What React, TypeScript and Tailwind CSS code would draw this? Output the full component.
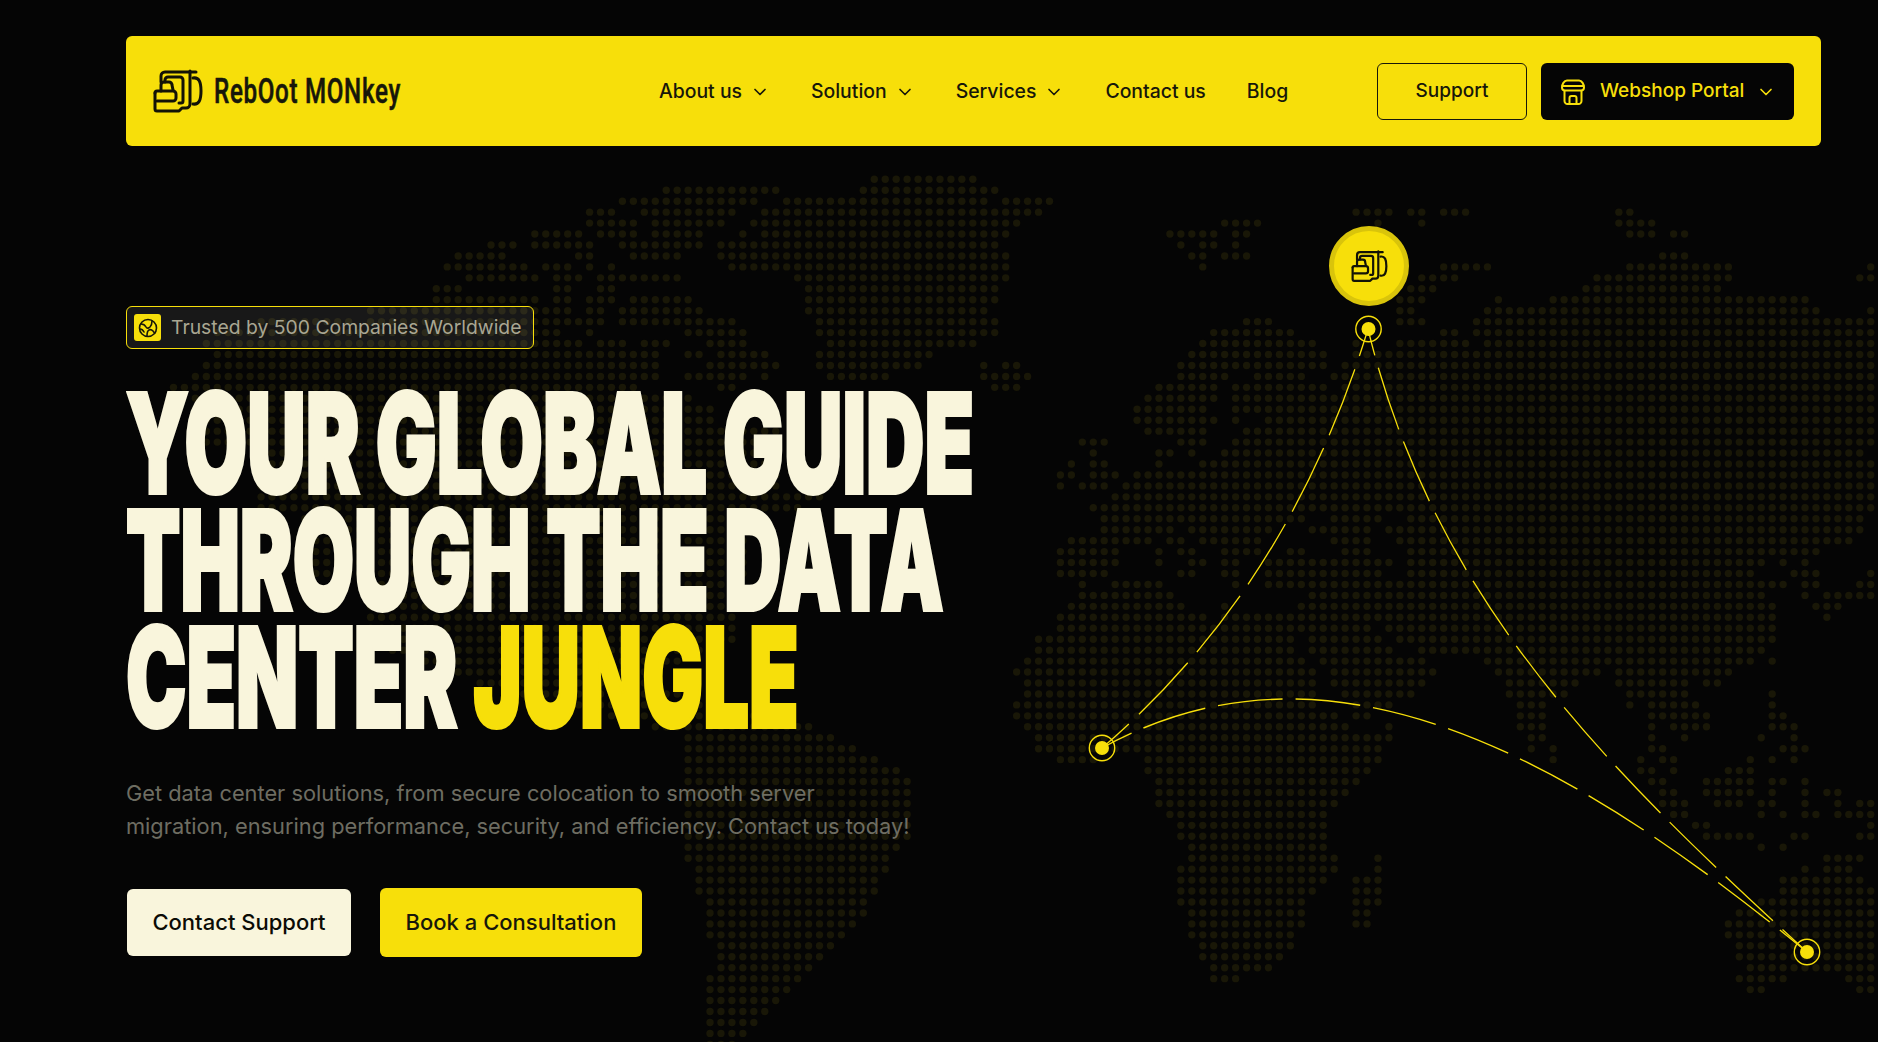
import { ChevronDown } from "lucide-react";

const ROWS: number[][] = [
  [-12, -3],
  [-31, -21, -13, -1],
  [-35, -23, -20, -2, 0, 4],
  [-38, -36, -33, -25, -22, 3, 32, 35, 37, 38, 40, 42, 56, 57],
  [-38, -34, -32, -26, -23, 1, 20, 23, 34, 34, 38, 38, 56, 59],
  [-43, -39, -37, -34, -32, -28, -24, -24, -22, 0, 15, 19, 21, 22, 57, 59, 61, 62],
  [-47, -45, -43, -38, -35, -28, -26, -1, 16, 16, 18, 19, 21, 21],
  [-50, -46, -39, -38, -34, -30, -26, 0, 17, 18, 20, 22, 60, 62],
  [-51, -44, -42, -40, -38, -38, -36, -36, -25, 0, 18, 18, 40, 44, 57, 66, 79, 79],
  [-49, -43, -41, -39, -37, -30, -19, 0, 38, 41, 54, 66, 78, 79],
  [-52, -50, -41, -40, -37, -36, -18, -1, 37, 39, 53, 65],
  [-52, -43, -41, -40, -38, -36, -34, -29, -18, -1, 36, 38, 45, 45, 50, 73],
  [-58, -41, -40, -40, -38, -37, -35, -28, -18, -2, 36, 37, 44, 74, 79, 79],
  [-68, -60, -58, -39, -38, -37, -35, -25, -17, -1, 22, 24, 36, 38, 43, 79],
  [-72, -41, -38, -38, -29, -24, -17, -1, 19, 26, 40, 41, 43, 79],
  [-73, -39, -37, -35, -33, -31, -27, -24, -16, -3, 18, 28, 32, 32, 36, 42, 44, 79],
  [-72, -32, -29, -28, -26, -22, -17, -7, 17, 29, 32, 79],
  [-73, -32, -27, -21, -17, -8, -2, -2, 0, 1, 16, 29, 31, 79],
  [-74, -32, -29, -24, -22, -22, -16, -11, -2, 2, 16, 20, 23, 27, 30, 79],
  [-76, -34, -26, -25, -1, 1, 14, 19, 21, 29, 31, 79],
  [-74, -29, 13, 19, 21, 79],
  [-74, -27, 12, 18, 21, 79],
  [-74, -27, 12, 19, 21, 21, 24, 79],
  [-74, -21, 13, 18, 22, 79],
  [-74, -21, 7, 9, 16, 18, 21, 79],
  [-68, -21, 8, 8, 14, 15, 17, 17, 20, 78],
  [-68, -21, 6, 6, 8, 9, 14, 14, 18, 79],
  [-68, -21, 5, 6, 8, 10, 12, 79],
  [-68, -21, 5, 5, 7, 9, 11, 79],
  [-68, -17, 10, 79],
  [-68, -19, 8, 79],
  [-64, -24, 9, 27, 30, 34, 37, 78],
  [-64, -24, 9, 15, 17, 24, 28, 33, 35, 78],
  [-64, -24, 6, 13, 15, 16, 18, 23, 30, 33, 36, 77],
  [-64, -24, 5, 10, 14, 14, 16, 17, 20, 23, 26, 27, 31, 33, 37, 74],
  [-64, -24, 5, 10, 14, 14, 17, 18, 20, 21, 24, 35, 37, 69, 71, 71, 73, 73],
  [-64, -24, 5, 9, 16, 17, 20, 21, 24, 34, 37, 68, 72, 74, 79, 79],
  [-58, -25, 7, 7, 10, 14, 21, 21, 24, 71, 73, 74, 78, 79],
  [-58, -25, 7, 15, 28, 69, 73, 73, 75, 79],
  [-58, -25, 6, 16, 20, 20, 27, 70, 74, 76],
  [-58, -25, 5, 18, 20, 70, 75, 75],
  [-58, -25, 5, 33, 35, 70],
  [-58, -25, 3, 26, 28, 34, 36, 70],
  [-56, -28, 3, 26, 28, 35, 38, 69],
  [-54, -30, 2, 27, 29, 38, 44, 68, 70, 70],
  [-52, -32, 1, 28, 30, 39, 45, 54, 56, 66],
  [-48, -32, 2, 28, 30, 38, 46, 52, 56, 62, 64, 65],
  [-44, -30, 2, 28, 31, 37, 46, 51, 57, 62, 70, 70],
  [-40, -26, 1, 28, 32, 35, 47, 49, 57, 57, 59, 63, 70, 70],
  [-36, -20, 1, 30, 32, 33, 47, 49, 59, 64, 70, 71],
  [-32, -18, 2, 31, 35, 35, 47, 49, 59, 59, 61, 64, 70, 72],
  [-29, -16, 3, 35, 48, 49, 59, 59, 62, 62, 69, 69, 72, 72],
  [-29, -14, 3, 34, 48, 48, 50, 50, 59, 60, 71, 73],
  [-29, -12, 5, 8, 13, 34, 50, 50, 58, 58, 60, 61, 68, 68, 70, 70, 72, 72],
  [-29, -10, 13, 33, 58, 59, 61, 61, 66, 68],
  [-29, -9, 14, 32, 59, 60, 64, 68, 70, 71, 73, 73],
  [-29, -9, 14, 31, 60, 61, 64, 68, 70, 70, 73, 73, 75, 76],
  [-29, -9, 14, 30, 60, 62, 65, 67, 69, 70, 73, 73, 76, 76, 78, 79],
  [-29, -9, 15, 29, 61, 62, 69, 69, 71, 71, 73, 74, 76, 79],
  [-29, -9, 16, 29, 63, 64, 79, 79],
  [-29, -9, 16, 29, 64, 68, 72, 73, 78, 79],
  [-29, -10, 17, 29, 69, 69, 71, 71],
  [-29, -11, 17, 30, 34, 34, 75, 78],
  [-28, -11, 16, 30, 34, 34, 73, 73, 75, 77],
  [-28, -12, 16, 29, 32, 34, 71, 78],
  [-28, -12, 16, 28, 32, 34, 71, 79],
  [-27, -13, 16, 27, 32, 34, 69, 79],
  [-27, -13, 17, 27, 32, 33, 67, 79],
  [-27, -14, 17, 27, 32, 33, 66, 79],
  [-27, -15, 17, 26, 66, 79],
  [-26, -16, 18, 26, 67, 79],
  [-26, -17, 18, 25, 67, 79],
  [-26, -18, 19, 24, 68, 79],
  [-27, -19, 19, 21, 67, 71, 77, 79],
  [-27, -20, 68, 69, 78, 79],
  [-27, -21],
  [-27, -22],
  [-27, -23],
  [-27, -24],
  [-27, -25],
];

const dots: { x: number; y: number }[] = [];
ROWS.forEach((spans, r) => {
  for (let i = 0; i < spans.length; i += 2) {
    for (let c = spans[i]; c <= spans[i + 1]; c++) {
      dots.push({ x: 1005.67 + 10.95 * c, y: 179.3 + 10.95 * r });
    }
  }
});

function Logo({ className }: { className: string }) {
  return (
    <svg viewBox="0 0 50 45" fill="none" stroke="#131306" strokeWidth="3" strokeLinecap="round" strokeLinejoin="round" className={className}>
      <path d="M43 3H12a4 4 0 0 0-4 4v6" />
      <path d="M37 2v33a4 4 0 0 1-4 4h-4l-3 3H4a2 2 0 0 1-2-2V24" />
      <path d="M12 13v-2a3 3 0 0 1 3-3h12a3 3 0 0 1 3 3v21a2 2 0 0 1-2 2h-2" />
      <path d="M8 22v-6a3 3 0 0 1 3-3h5a3 3 0 0 1 3 3l1 5" />
      <path d="M2 24a2 2 0 0 1 2-2h16a3 3 0 0 1 3 3v4a3 3 0 0 1-3 3H4" />
      <path d="M40 9c6-1 8 4 8 13s-2 14-8 13" />
    </svg>
  );
}

function NavItem({ label, chevron }: { label: string; chevron?: boolean }) {
  return (
    <a className="flex items-center gap-[8px] pt-[2px] text-[19.4px] font-medium text-[#17170a]">
      {label}
      {chevron && <ChevronDown size={20} strokeWidth={2} />}
    </a>
  );
}

function StoreIcon() {
  return (
    <svg viewBox="0 0 26 26" fill="none" stroke="#f7df0a" strokeWidth="2" strokeLinecap="round" strokeLinejoin="round" className="h-[26px] w-[26px]">
      <path d="M7 1.5h12c3 0 5 4 5 7a3 3 0 0 1-3 3H5a3 3 0 0 1-3-3c0-3 2-7 5-7z" />
      <path d="M2.5 7h21" />
      <path d="M4.5 12v10a3 3 0 0 0 3 3h11a3 3 0 0 0 3-3V12" />
      <path d="M9.5 25v-6a2 2 0 0 1 2-2h3a2 2 0 0 1 2 2v6" />
    </svg>
  );
}

function GlobeIcon() {
  return (
    <svg viewBox="0 0 20 20" fill="none" stroke="#17170a" strokeWidth="1.6" strokeLinecap="round" strokeLinejoin="round" className="h-[20px] w-[20px]">
      <circle cx="10" cy="10" r="8.5" />
      <path d="M3 6c2 0 4 1 5 3s3 1 4 0 2-4 2-6" />
      <path d="M9 18c0-3 0-5 2-6s3 0 4 1 1 2 2 2" />
      <path d="M2 11c2 0 3 1 4 3" />
    </svg>
  );
}

const lineClass = "block origin-left whitespace-nowrap [-webkit-text-stroke:4px_currentColor]";

export default function App() {
  return (
    <div className="relative h-[1042px] w-full overflow-hidden bg-[#050505] font-['Inter',sans-serif]">
      <svg viewBox="0 0 1878 1042" className="absolute inset-0 h-full w-full" fill="none">
        {dots.map((d, i) => (
          <circle key={i} cx={d.x} cy={d.y} r="3.7" fill="#191707" />
        ))}
        <path d="M1102 748 Q1289 587.5 1368 329" stroke="#f7df0a" strokeWidth="1.3" strokeDasharray="71 14" strokeDashoffset="35" />
        <path d="M1368 329 C1434 601.6 1610 772 1807 952" stroke="#f7df0a" strokeWidth="1.3" strokeDasharray="65 13" strokeDashoffset="38" />
        <path d="M1102 748 C1329.5 622.4 1567 755.5 1807 952" stroke="#f7df0a" strokeWidth="1.4" strokeDasharray="65 13" strokeDashoffset="32" />
        {[
          [1368.5, 329],
          [1102, 748],
          [1807, 952],
        ].map(([x, y]) => (
          <g key={x}>
            <circle cx={x} cy={y} r="12.7" stroke="#f7df0a" strokeWidth="1.4" />
            <circle cx={x} cy={y} r="7" fill="#f7df0a" />
          </g>
        ))}
      </svg>

      <div className="absolute left-[1329px] top-[226px] flex h-[80px] w-[80px] items-center justify-center rounded-full border-[5px] border-[#d9c40b] bg-[#f7df0a]">
        <Logo className="h-[33px] w-[37px]" />
      </div>

      <div className="relative ml-[126px] mr-[57px] pt-[36px]">
        <header className="flex h-[110px] items-center justify-between rounded-[6px] bg-[#f7df0a] px-[27px]">
          <div className="flex items-center gap-[11px]">
            <Logo className="h-[45px] w-[50px]" />
            <span className="inline-block w-[188px] origin-left scale-x-[.69] whitespace-nowrap font-['Roboto',sans-serif] text-[35px] font-medium leading-none tracking-[1px] text-[#17170a] [-webkit-text-stroke:0.6px_#17170a]">
              RebOot MONkey
            </span>
          </div>
          <nav className="ml-[257px] flex items-center gap-[41px]">
            <NavItem label="About us" chevron />
            <NavItem label="Solution" chevron />
            <NavItem label="Services" chevron />
            <NavItem label="Contact us" />
            <NavItem label="Blog" />
          </nav>
          <div className="ml-auto flex items-center gap-[14px]">
            <a className="flex h-[57px] w-[150px] items-center justify-center rounded-[6px] border-[1.5px] border-[#17170a] pt-[1px] text-[19px] font-medium text-[#17170a]">
              Support
            </a>
            <a className="flex h-[57px] w-[253px] items-center gap-[14px] rounded-[6px] bg-[#050505] pl-[19px] pt-[1px] text-[19px] font-medium text-[#f7df0a]">
              <StoreIcon />
              Webshop Portal
              <ChevronDown size={20} strokeWidth={2} className="-ml-[2px]" />
            </a>
          </div>
        </header>

        <main className="pt-[160px]">
          <div className="inline-flex h-[43px] items-center gap-[10px] rounded-[6px] border-[1.5px] border-[#f7df0a] bg-white/[0.08] pl-[7px] pr-[12px]">
            <span className="flex h-[27px] w-[27px] items-center justify-center rounded-[3px] bg-[#f7df0a]">
              <GlobeIcon />
            </span>
            <span className="text-[19.35px] leading-none text-[#a9a692]">Trusted by 500 Companies Worldwide</span>
          </div>

          <h1 className="mt-[35px] font-['Inter',sans-serif] text-[138px] font-black leading-[117px] text-[#f9f5dc]">
            <span className={lineClass + " scale-x-[.586]"}>YOUR GLOBAL GUIDE</span>
            <span className={lineClass + " scale-x-[.574]"}>THROUGH THE DATA</span>
            <span className={lineClass + " scale-x-[.586]"}>
              CENTER <span className="text-[#f7df0a]">JUNGLE</span>
            </span>
          </h1>

          <p className="mt-[42px] text-[21.8px] leading-[33px] text-[#6e6d62]">
            Get data center solutions, from secure colocation to smooth server
            <br />
            migration, ensuring performance, security, and efficiency. Contact us today!
          </p>

          <div className="mt-[45px] flex items-center gap-[29px]">
            <a className="ml-[1px] flex h-[67px] w-[224px] items-center justify-center rounded-[6px] bg-[#f9f5dc] text-[22px] font-medium text-[#0b0b05]">
              Contact Support
            </a>
            <a className="flex h-[69px] w-[262px] items-center justify-center rounded-[6px] bg-[#f7df0a] text-[22px] font-medium text-[#17170a]">
              Book a Consultation
            </a>
          </div>
        </main>
      </div>
    </div>
  );
}
